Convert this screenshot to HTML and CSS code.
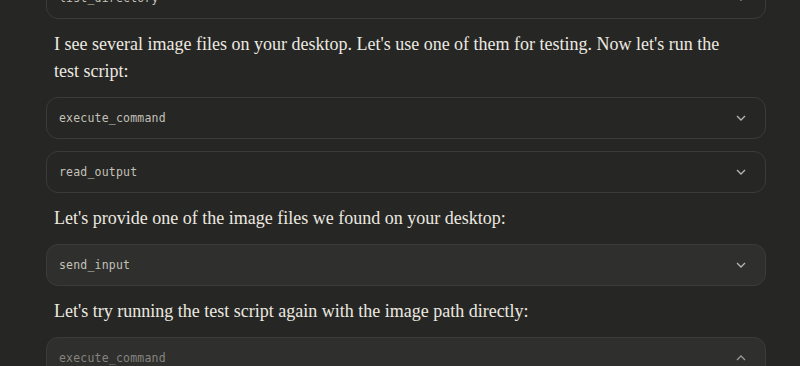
FILE: index.html
```html
<!DOCTYPE html>
<html lang="en">
<head>
  <meta charset="UTF-8" />
  <title>Chat</title>
  <link rel="stylesheet" href="styles.css">
</head>
<body>
  <div class="thread">

    <div class="tool">
      <span class="tool-name">list_directory</span>
      <svg class="chev" viewBox="0 0 10 6"><path d="M1 1l4 4 4-4"/></svg>
    </div>

    <p class="msg">I see several image files on your desktop. Let's use one of them for testing. Now let's run the test script:</p>

    <div class="tool">
      <span class="tool-name">execute_command</span>
      <svg class="chev" viewBox="0 0 10 6"><path d="M1 1l4 4 4-4"/></svg>
    </div>
    <div class="tool">
      <span class="tool-name">read_output</span>
      <svg class="chev" viewBox="0 0 10 6"><path d="M1 1l4 4 4-4"/></svg>
    </div>

    <p class="msg">Let's provide one of the image files we found on your desktop:</p>

    <div class="tool tool-hover">
      <span class="tool-name">send_input</span>
      <svg class="chev" viewBox="0 0 10 6"><path d="M1 1l4 4 4-4"/></svg>
    </div>

    <p class="msg">Let's try running the test script again with the image path directly:</p>

    <div class="tool tool-open">
      <span class="tool-name">execute_command</span>
      <svg class="chev" viewBox="0 0 10 6"><path d="M1 5l4-4 4 4"/></svg>
    </div>

  </div>
</body>
</html>
```

FILE: styles.css
```css
* { margin: 0; padding: 0; box-sizing: border-box; }
html, body { height: 100%; }
body {
  background-color: #262624;
  overflow: hidden;
}
.thread {
  width: 720px;
  margin: -23px 0 0 46px;
  display: flex;
  flex-direction: column;
  gap: 12px;
}
.tool {
  height: 42px;
  border: 1px solid #3b3b38;
  border-radius: 12px;
  padding: 0 12px 0 12px;
  display: flex;
  align-items: center;
  justify-content: space-between;
}
.tool-hover { background-color: #2f2f2d; }
.tool-open { background-color: #2f2f2d; }
.tool-name {
  font-family: "DejaVu Sans Mono", monospace;
  font-size: 11.5px;
  color: #c3c1b8;
  letter-spacing: 0.2px;
}
.tool-open .tool-name { color: #85847e; }
.chev {
  width: 10px;
  height: 6px;
  margin-right: 7px;
  fill: none;
  stroke: #b8b6ae;
  stroke-width: 1.3;
}
.tool-open .chev { stroke: #9a9993; }
.msg {
  font-family: "Liberation Serif", "DejaVu Serif", serif;
  font-size: 18px;
  line-height: 27px;
  color: #ece9e0;
  padding: 0 40px 0 8px;
  margin: 0;
}
```
